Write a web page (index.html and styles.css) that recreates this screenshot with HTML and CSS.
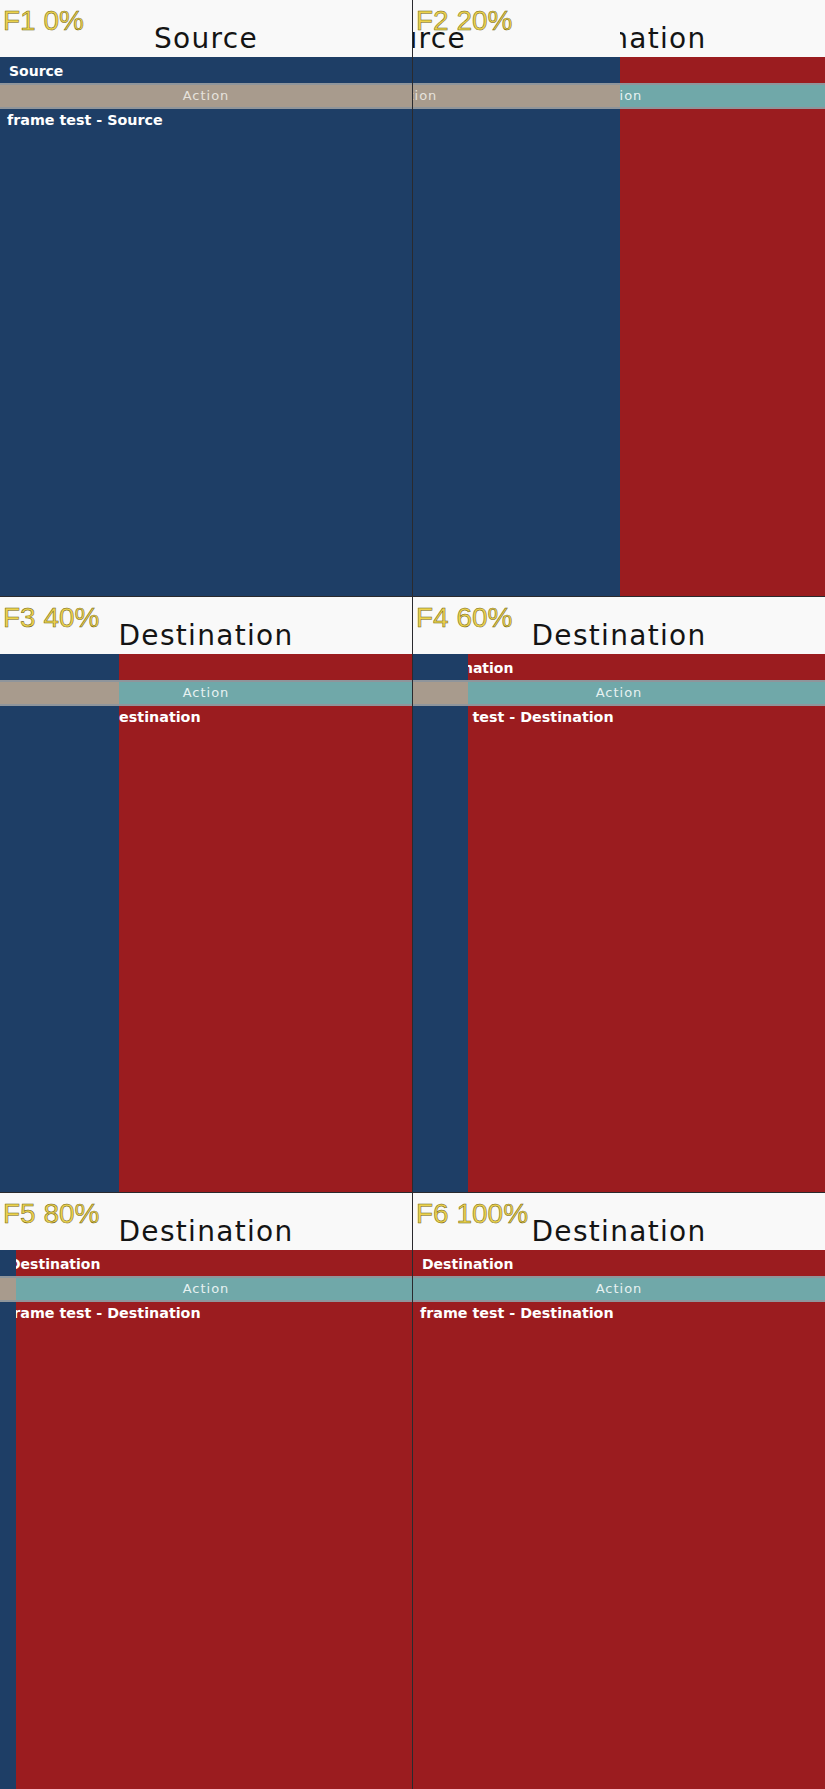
FILE: index.html
```html
<!DOCTYPE html>
<html lang="en">
<head>
<meta charset="utf-8">
<title>Frame test</title>
<link rel="stylesheet" href="styles.css">
</head>
<body>
<main class="grid">
  <section class="frame">
    <div class="view src">
      <header class="head"><span class="title">Source</span></header>
      <div class="bar">Source</div>
      <div class="action">Action</div>
      <div class="content">frame test - Source</div>
    </div>
    <div class="label">F1 0%</div>
  </section>

  <section class="frame">
    <div class="view dst">
      <header class="head"><span class="title">Destination</span></header>
      <div class="bar">Destination</div>
      <div class="action">Action</div>
      <div class="content">frame test - Destination</div>
    </div>
    <div class="view src over" style="transform: translateX(-205px)">
      <header class="head"><span class="title">Source</span></header>
      <div class="bar">Source</div>
      <div class="action">Action</div>
      <div class="content">frame test - Source</div>
    </div>
    <div class="label">F2 20%</div>
  </section>

  <section class="frame">
    <div class="view dst">
      <header class="head"><span class="title">Destination</span></header>
      <div class="bar">Destination</div>
      <div class="action">Action</div>
      <div class="content">frame test - Destination</div>
    </div>
    <div class="view src over" style="transform: translateX(-293px)">
      <header class="head"><span class="title">Source</span></header>
      <div class="bar">Source</div>
      <div class="action">Action</div>
      <div class="content">frame test - Source</div>
    </div>
    <div class="label">F3 40%</div>
  </section>

  <section class="frame">
    <div class="view dst">
      <header class="head"><span class="title">Destination</span></header>
      <div class="bar">Destination</div>
      <div class="action">Action</div>
      <div class="content">frame test - Destination</div>
    </div>
    <div class="view src over" style="transform: translateX(-357px)">
      <header class="head"><span class="title">Source</span></header>
      <div class="bar">Source</div>
      <div class="action">Action</div>
      <div class="content">frame test - Source</div>
    </div>
    <div class="label">F4 60%</div>
  </section>

  <section class="frame">
    <div class="view dst">
      <header class="head"><span class="title">Destination</span></header>
      <div class="bar">Destination</div>
      <div class="action">Action</div>
      <div class="content">frame test - Destination</div>
    </div>
    <div class="view src over" style="transform: translateX(-396px)">
      <header class="head"><span class="title">Source</span></header>
      <div class="bar">Source</div>
      <div class="action">Action</div>
      <div class="content">frame test - Source</div>
    </div>
    <div class="label">F5 80%</div>
  </section>

  <section class="frame">
    <div class="view dst">
      <header class="head"><span class="title">Destination</span></header>
      <div class="bar">Destination</div>
      <div class="action">Action</div>
      <div class="content">frame test - Destination</div>
    </div>
    <div class="label">F6 100%</div>
  </section>
</main>
</body>
</html>
```

FILE: styles.css
```css
* { box-sizing: border-box; }

html, body {
  margin: 0;
  padding: 0;
  background: #2a2a2e;
}

.grid {
  display: grid;
  grid-template-columns: 412px 412px;
  grid-template-rows: repeat(3, 1fr);
  gap: 1px;
  width: 825px;
  height: 1789px;
  background: #2a2a2e;
}

.frame {
  position: relative;
  overflow: hidden;
  background: #9b1c1f;
}

.view {
  display: flex;
  flex-direction: column;
  width: 100%;
  height: 100%;
  font-family: "DejaVu Sans", sans-serif;
}

.over {
  position: absolute;
  top: 0;
  left: 0;
}

.src { background: #1e3e66; }
.dst { background: #9b1c1f; }

.head {
  height: 57px;
  flex: 0 0 57px;
  background: #f9f9f9;
  text-align: center;
  padding-top: 25px;
}

.title {
  display: inline-block;
  font-size: 28px;
  line-height: 28px;
  letter-spacing: 1.3px;
  color: #141414;
  white-space: nowrap;
}

.bar {
  height: 28px;
  flex: 0 0 28px;
  padding: 1px 0 0 9px;
  font-size: 14px;
  line-height: 26px;
  font-weight: bold;
  color: #ffffff;
  white-space: nowrap;
  border-bottom: 2px solid #8f959b;
}

.action {
  height: 24px;
  flex: 0 0 24px;
  text-align: center;
  font-size: 13px;
  line-height: 22px;
  letter-spacing: 1px;
  white-space: nowrap;
  border-bottom: 2px solid #8f959b;
}

.src .action { background: #a89b8d; color: #e6e2dc; }
.dst .action { background: #70a8a9; color: #e6f1f1; }

.content {
  flex: 1 1 auto;
  padding: 3px 0 0 7px;
  font-size: 14.3px;
  line-height: 17px;
  font-weight: bold;
  color: #ffffff;
  white-space: nowrap;
}

.label {
  position: absolute;
  top: 7px;
  left: 3px;
  font-family: "Liberation Sans", Arial, sans-serif;
  font-size: 28px;
  line-height: 27px;
  color: #ecd24e;
  -webkit-text-stroke: 0.5px #6e5e10;
  white-space: nowrap;
}
```
